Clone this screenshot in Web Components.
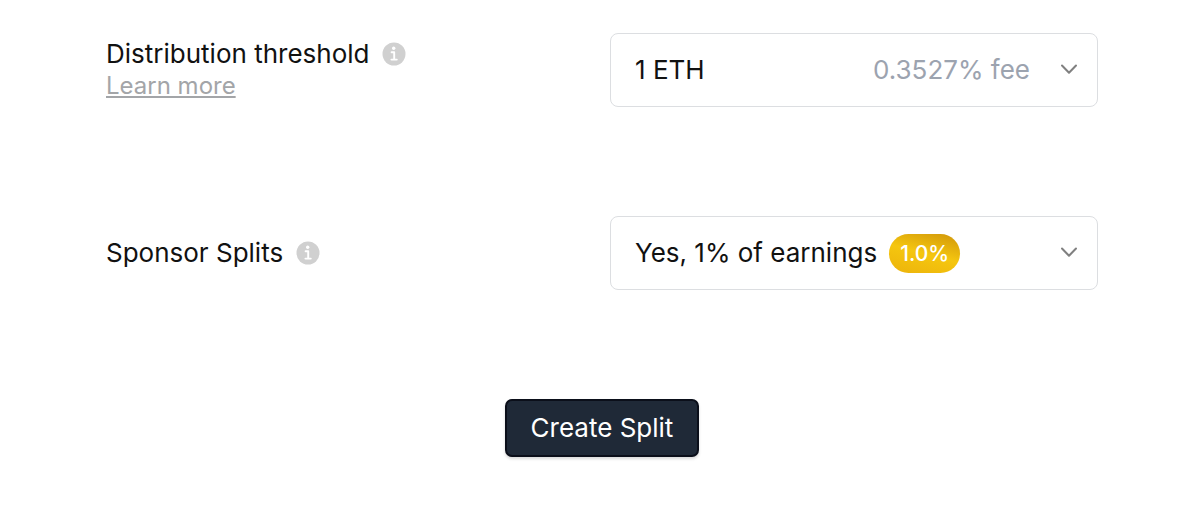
<!DOCTYPE html>
<html lang="en">
<head>
<meta charset="utf-8">
<meta name="viewport" content="width=device-width, initial-scale=1">
<title>Create Split</title>
<style>
    body {
        margin: 0;
        background: #fff;
        color: #111;
        font-family: Inter, "Liberation Sans", sans-serif;
        font-size: 26px;
        line-height: 32px;
    }
</style>
</head>
<body>
<split-form>
    <setting-row data-label="Distribution threshold" data-options='["1 ETH"]'>
        <help-link slot="help" data-href="#threshold">Learn more</help-link>
        <fee-note slot="end">0.3527% fee</fee-note>
    </setting-row>
    <setting-row data-label="Sponsor Splits" data-options='["Yes, 1% of earnings"]'>
        <percent-badge slot="badge">1.0%</percent-badge>
    </setting-row>
    <submit-button slot="action">Create Split</submit-button>
</split-form>

<script>
class SplitForm extends HTMLElement {
    constructor() {
        super();
        this.attachShadow({mode: "open"});
    }

    connectedCallback() {
        let style = `
            :host {
                display: block;
                padding: 33px 102px 50px 106px;
            }

            form {
                display: flex;
                flex-direction: column;
                gap: 109px;
            }

            .actions {
                display: flex;
                justify-content: center;
            }
        `;
        let html = `
            <form>
                <slot></slot>
                <div class="actions"><slot name="action"></slot></div>
            </form>
        `;
        this.shadowRoot.innerHTML = "<style>" + style + "</style>" + html;
    }
}
customElements.define('split-form', SplitForm);

class SettingRow extends HTMLElement {
    constructor() {
        super();
        this.attachShadow({mode: "open"});
    }

    connectedCallback() {
        let options = JSON.parse(this.getAttribute('data-options'));
        let style = `
            :host {
                display: grid;
                grid-template-columns: 1fr 1fr;
                gap: 16px;
                align-items: center;
            }

            .title {
                display: flex;
                align-items: center;
                gap: 13px;
            }

            .field {
                display: flex;
                align-items: center;
                box-sizing: border-box;
                height: 74px;
                padding: 0 20px 0 24px;
                border: 1px solid #dcdee1;
                border-radius: 8px;
                cursor: pointer;
            }

            .field:focus-within {
                border-color: #9ca3af;
            }

            select {
                appearance: none;
                field-sizing: content;
                margin: 0 12px 0 0;
                padding: 0;
                border: 0;
                outline: 0;
                background: none;
                color: inherit;
                font: inherit;
                cursor: pointer;
            }

            .end {
                margin-left: auto;
            }

            .chevron {
                flex: none;
                margin-left: 31px;
            }
        `;
        let html = `
            <div>
                <div class="title">
                    <label for="choice">${this.getAttribute('data-label')}</label>
                    <info-icon></info-icon>
                </div>
                <slot name="help"></slot>
            </div>
            <div class="field">
                <select id="choice">
                    ${options.map(option => `<option>${option}</option>`).join('')}
                </select>
                <slot name="badge"></slot>
                <div class="end"><slot name="end"></slot></div>
                <svg class="chevron" xmlns="http://www.w3.org/2000/svg" width="16" height="12" viewBox="0 0 16 12" fill="none" stroke="#808080" stroke-width="2" stroke-linecap="round" stroke-linejoin="round" aria-hidden="true"><path d="M1 1.5 8 8.8 15 1.5"/></svg>
            </div>
        `;
        this.shadowRoot.innerHTML = "<style>" + style + "</style>" + html;

        // the whole box opens the list, not only the text
        let select = this.shadowRoot.querySelector('select');
        this.shadowRoot.querySelector('.field').addEventListener('click', event => {
            if (event.target !== select && select.showPicker) {
                select.showPicker();
            }
        });
    }
}
customElements.define('setting-row', SettingRow);

class InfoIcon extends HTMLElement {
    constructor() {
        super();
        this.attachShadow({mode: "open"});
    }

    connectedCallback() {
        let style = `
            :host {
                display: inline-flex;
            }
        `;
        let html = `
            <svg xmlns="http://www.w3.org/2000/svg" width="24" height="24" viewBox="0 0 24 24" aria-hidden="true">
                <circle cx="12" cy="12" r="11.5" fill="#d0d0d0"/>
                <circle cx="11.7" cy="6.3" r="1.7" fill="#fff"/>
                <path d="M9.6 10.3h2.6v7M9.4 17.6h5.4" fill="none" stroke="#fff" stroke-width="1.9" stroke-linecap="round" stroke-linejoin="round"/>
            </svg>
        `;
        this.shadowRoot.innerHTML = "<style>" + style + "</style>" + html;
    }
}
customElements.define('info-icon', InfoIcon);

class HelpLink extends HTMLElement {
    constructor() {
        super();
        this.attachShadow({mode: "open"});
    }

    connectedCallback() {
        let style = `
            :host {
                display: block;
                font-size: 24px;
            }

            a {
                color: #a3a5a8;
                text-decoration: underline;
                text-decoration-thickness: 2px;
                text-underline-offset: 2px;
            }
        `;
        let html = `<a href="${this.getAttribute('data-href')}"><slot></slot></a>`;
        this.shadowRoot.innerHTML = "<style>" + style + "</style>" + html;
    }
}
customElements.define('help-link', HelpLink);

class FeeNote extends HTMLElement {
    constructor() {
        super();
        this.attachShadow({mode: "open"});
    }

    connectedCallback() {
        let style = `
            :host {
                display: block;
                color: #9ca3af;
            }
        `;
        this.shadowRoot.innerHTML = "<style>" + style + "</style><slot></slot>";
    }
}
customElements.define('fee-note', FeeNote);

class PercentBadge extends HTMLElement {
    constructor() {
        super();
        this.attachShadow({mode: "open"});
    }

    connectedCallback() {
        let style = `
            :host {
                display: block;
                padding: 4px 11px;
                border-radius: 20px;
                background: linear-gradient(15deg, #eeb70c 10%, #f5c60f 50%, #d39a0b 95%);
                color: #fff;
                font-size: 21px;
                font-weight: 500;
                line-height: 31px;
            }
        `;
        this.shadowRoot.innerHTML = "<style>" + style + "</style><slot></slot>";
    }
}
customElements.define('percent-badge', PercentBadge);

class SubmitButton extends HTMLElement {
    constructor() {
        super();
        this.attachShadow({mode: "open"});
    }

    connectedCallback() {
        let style = `
            :host {
                display: block;
            }

            button {
                display: block;
                padding: 11px 24px;
                border: 2px solid #0b0f1a;
                border-radius: 7px;
                background: #1f2937;
                box-shadow: 0 2px 3px rgba(0, 0, 0, 0.15);
                color: #fff;
                font: inherit;
                cursor: pointer;
            }
        `;
        let html = `<button type="button"><slot></slot></button>`;
        this.shadowRoot.innerHTML = "<style>" + style + "</style>" + html;
    }
}
customElements.define('submit-button', SubmitButton);
</script>
</body>
</html>
